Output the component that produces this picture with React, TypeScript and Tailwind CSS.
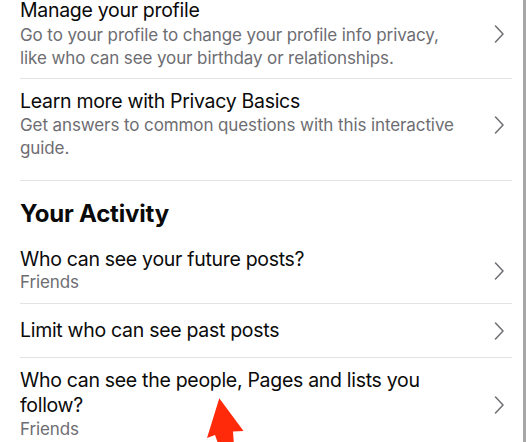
import React from "react";

const font = { fontFamily: "Inter, 'Liberation Sans', sans-serif" };

function Chevron() {
  return (
    <svg width="12" height="18" viewBox="0 0 12 18" className="shrink-0">
      <path d="M2.5 1 L10 9 L2.5 17" fill="none" stroke="#6e6e73" strokeWidth="1.5" strokeLinecap="round" strokeLinejoin="round" />
    </svg>
  );
}

function Row({
  title,
  sub,
  className,
  subClass = "",
  border = true,
}: {
  title: React.ReactNode;
  sub?: React.ReactNode;
  className: string;
  subClass?: string;
  border?: boolean;
}) {
  return (
    <div className={`flex items-center gap-3 ${border ? "border-b border-[#e3e3e5]" : ""} ${className}`}>
      <div className="flex-1 min-w-0">
        <div className="text-[19.5px] leading-[25px] text-[#0a0a0a] tracking-[-0.3px]">{title}</div>
        {sub && <div className={`text-[17px] leading-[23px] text-[#6d6d72] tracking-[-0.1px] ${subClass}`}>{sub}</div>}
      </div>
      <div className="pr-[7px]">
        <Chevron />
      </div>
    </div>
  );
}

export default function App() {
  return (
    <div className="relative flex w-[531px] h-[442px] overflow-hidden bg-white" style={font}>
      <div className="w-[523px] pl-5 pr-[11px] flex flex-col">
        <Row
          className="-mt-[2px] pb-[8px]"
          title="Manage your profile"
          subClass="mt-[1px]"
          sub={
            <>
              Go to your profile to change your profile info privacy,
              <br />
              like who can see your birthday or relationships.
            </>
          }
        />
        <Row
          className="pt-[10px] pb-[20px]"
          title="Learn more with Privacy Basics"
          sub={
            <>
              Get answers to common questions with this interactive
              <br />
              guide.
            </>
          }
        />
        <div className="pt-[18px] text-[24px] leading-[30px] font-bold text-[#0a0a0a] tracking-[-0.2px]">
          Your Activity
        </div>
        <Row
          className="pt-[18px] pb-[9px]"
          title="Who can see your future posts?"
          subClass="-mt-[1px]"
          sub="Friends"
        />
        <Row className="pt-[14px] pb-[14px]" title="Limit who can see past posts" />
        <Row
          className="pt-[10px] pb-[10px]"
          border={false}
          title={
            <>
              Who can see the people, Pages and lists you
              <br />
              follow?
            </>
          }
          sub="Friends"
        />
      </div>
      <div className="w-[3px] h-full bg-[#a7a7a7]" />
      <svg className="absolute left-0 top-0 pointer-events-none" width="531" height="442" viewBox="0 0 531 442">
        <polygon
          points="219.3,398.3 243.5,431 233,431.5 234,446 219,446 215,435 207,438"
          fill="#ff2a0a"
        />
      </svg>
    </div>
  );
}
